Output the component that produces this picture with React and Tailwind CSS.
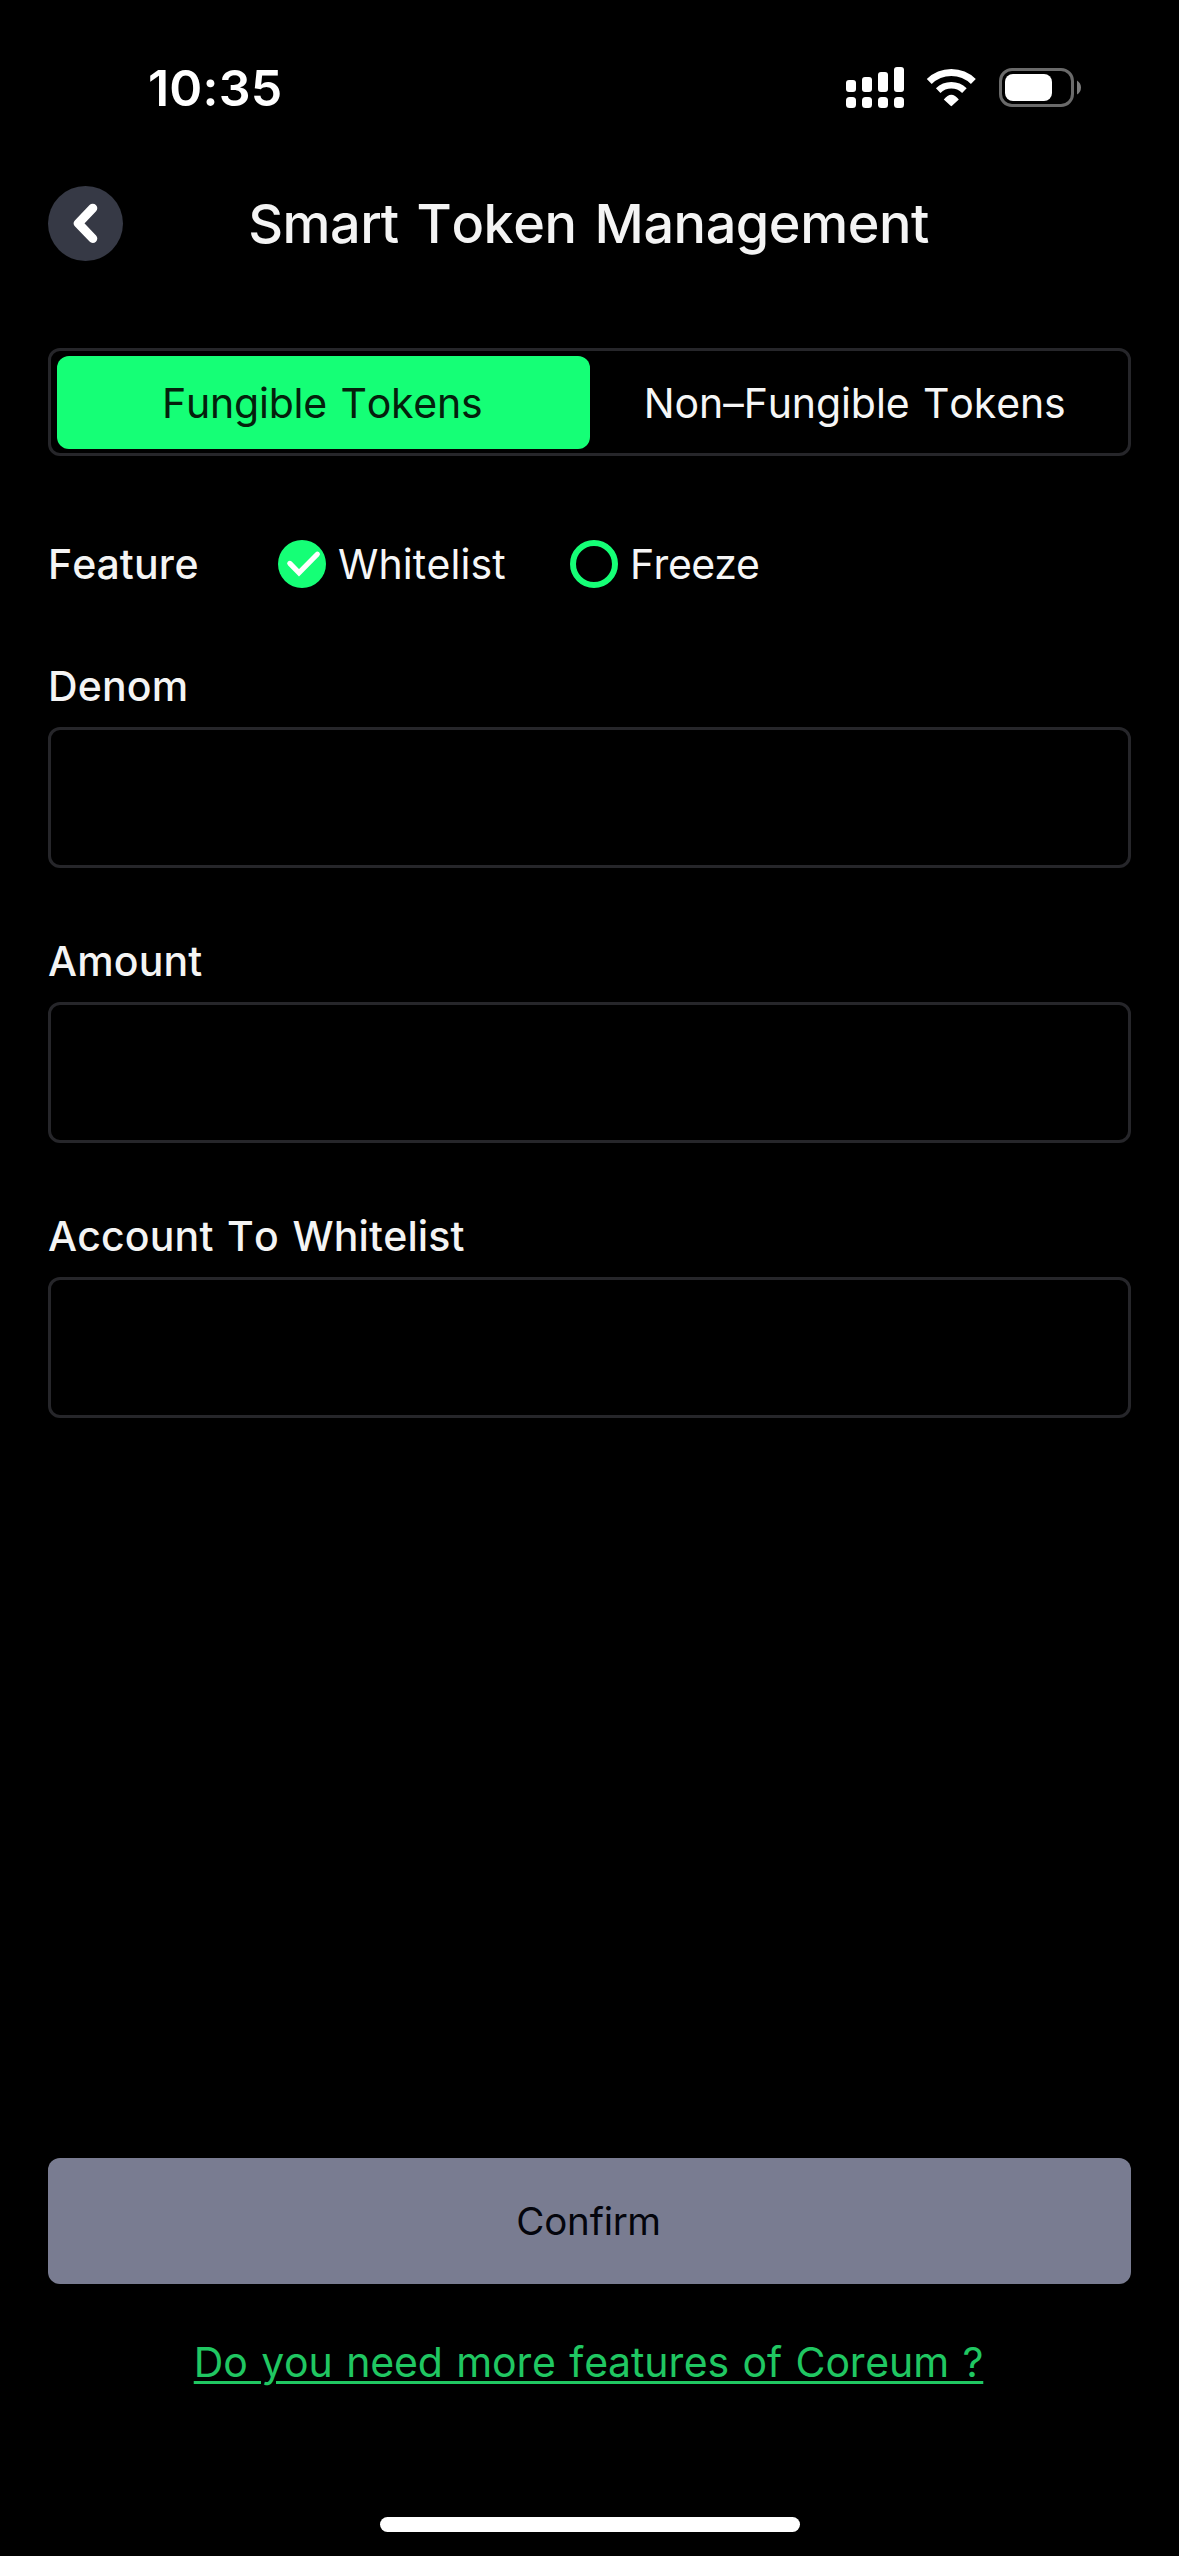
import React, { useState } from "react";

const BARS = [
  { x: 0, y: 13, h: 12 },
  { x: 16, y: 10, h: 15 },
  { x: 32, y: 5, h: 20 },
  { x: 48, y: 0, h: 25 },
];

function SignalIcon() {
  return (
    <svg width="58" height="41" viewBox="0 0 58 41" fill="#fff">
      {BARS.map((b) => (
        <g key={b.x}>
          <rect x={b.x} y={b.y} width="10" height={b.h} rx="3" />
          <rect x={b.x} y="30" width="10" height="11" rx="3.5" />
        </g>
      ))}
    </svg>
  );
}

function WifiIcon() {
  return (
    <svg width="51" height="40" viewBox="0 0 51 40" fill="none" stroke="#fff">
      <path d="M3.25 13.5A31.5 31.5 0 0 1 47.35 13.5" strokeWidth="7" />
      <path d="M12.2 22.6A18.75 18.75 0 0 1 38.4 22.6" strokeWidth="6.5" />
      <path d="M17.8 31.5Q25.3 22 32.8 31.5L26 37.8Q25.3 38.5 24.6 37.8Z" fill="#fff" stroke="none" />
    </svg>
  );
}

function BatteryIcon() {
  return (
    <svg width="82" height="39" viewBox="0 0 82 39">
      <rect x="1.5" y="1.5" width="72" height="36" rx="11.5" fill="none" stroke="#6a6a6a" strokeWidth="3" />
      <rect x="6" y="6" width="47" height="27" rx="8" fill="#fff" />
      <path d="M78 12.5Q82 15 82 19.5Q82 24 78 26.5Z" fill="#7c7c7c" />
    </svg>
  );
}

function StatusBar() {
  return (
    <div className="flex h-[175px] shrink-0 items-center justify-between pr-[98px] pl-[148px]">
      <span className="text-[50px] leading-[60px] font-semibold tracking-[0.2px] text-white">10:35</span>
      <div className="flex items-center">
        <SignalIcon />
        <span className="ml-[22px]">
          <WifiIcon />
        </span>
        <span className="ml-[22px]">
          <BatteryIcon />
        </span>
      </div>
    </div>
  );
}

function Header() {
  return (
    <header className="mt-[11px] grid h-[75px] shrink-0 grid-cols-[75px_1fr_75px] items-center px-12">
      <button aria-label="Back" className="size-[75px] rounded-full bg-[#363945]">
        <svg width="75" height="75" viewBox="0 0 75 75" fill="none" stroke="#fff" strokeWidth="9" strokeLinecap="round" strokeLinejoin="round">
          <path d="M44.8 22.2L30.3 37.4L44.8 52.5" />
        </svg>
      </button>
      <h1 className="pr-0.5 text-center text-[54px] leading-[64px] font-medium tracking-[-0.45px] whitespace-nowrap text-[#f4f4f4] [word-spacing:4px]">
        Smart Token Management
      </h1>
    </header>
  );
}

function Tab({ active, onClick, children }) {
  return (
    <button
      onClick={onClick}
      className={
        "h-[93px] rounded-xl text-[41px] leading-[50px] [word-spacing:2px] " +
        (active ? "bg-[#15ff76] pr-0.5 tracking-[-0.2px] text-[#04200c]" : "pr-0.5 tracking-[-0.1px] text-[#f6f6f6]")
      }
    >
      {children}
    </button>
  );
}

function Option({ checked, onClick, children }) {
  return (
    <button onClick={onClick} className="flex items-center text-[41px] leading-[50px] text-[#f6f6f6]">
      <svg width="48" height="48" viewBox="0 0 48 48" fill="none">
        {checked ? (
          <>
            <circle cx="24" cy="24" r="24" fill="#15ff76" />
            <path d="M11.8 23.4L21 32.8L39.3 14.2" stroke="#fff" strokeWidth="5.2" strokeLinecap="round" />
          </>
        ) : (
          <circle cx="24" cy="24" r="21" stroke="#15ff76" strokeWidth="6" />
        )}
      </svg>
      {children}
    </button>
  );
}

function Field({ label }) {
  return (
    <label className="flex h-[275px] flex-col">
      <span className="text-[41px] leading-[50px] font-medium tracking-[0.15px] text-[#f4f4f4] [word-spacing:2.5px]">
        {label}
      </span>
      <input className="mt-4 h-[141px] w-full rounded-xl border-[3px] border-[#26262a] bg-transparent px-6 text-[41px] text-white outline-none" />
    </label>
  );
}

export default function App() {
  const [tab, setTab] = useState(0);
  const [feature, setFeature] = useState("Whitelist");
  return (
    <div className="flex h-[2556px] w-[1179px] flex-col bg-black font-['Inter',sans-serif] [font-kerning:none]">
      <StatusBar />
      <Header />
      <main className="flex flex-1 flex-col px-12">
        <div className="mt-[87px] grid h-[108px] grid-cols-2 rounded-xl border-[3px] border-[#26262a] px-1.5 pt-[5px]">
          <Tab active={tab === 0} onClick={() => setTab(0)}>
            Fungible Tokens
          </Tab>
          <Tab active={tab === 1} onClick={() => setTab(1)}>
            Non–Fungible Tokens
          </Tab>
        </div>

        <div className="mt-[83px] flex h-[50px] items-center">
          <span className="w-[230px] text-[41px] leading-[50px] font-medium tracking-[0.1px] text-[#f4f4f4]">
            Feature
          </span>
          <Option checked={feature === "Whitelist"} onClick={() => setFeature("Whitelist")}>
            <span className="w-[244px] pl-3 text-left tracking-[0.1px]">Whitelist</span>
          </Option>
          <Option checked={feature === "Freeze"} onClick={() => setFeature("Freeze")}>
            <span className="pl-3 tracking-[-0.8px]">Freeze</span>
          </Option>
        </div>

        <div className="mt-[72px] flex flex-col">
          <Field label="Denom" />
          <Field label="Amount" />
          <Field label="Account To Whitelist" />
        </div>

        <button className="mt-auto h-[126px] shrink-0 rounded-xl bg-[#797c91] pr-0.5 text-[38.5px] leading-[48px] tracking-[-0.2px] text-[#04050c]">
          Confirm
        </button>
        <a
          href="#features"
          className="mt-[53px] self-center pr-0.5 text-[41px] leading-[50px] tracking-[-0.1px] whitespace-nowrap text-[#20c762] underline decoration-[3px] underline-offset-4 [word-spacing:2px]"
        >
          Do you need more features of Coreum ?
        </a>
      </main>
      <div className="mt-[130px] mb-6 h-[15px] w-[420px] shrink-0 self-center rounded-full bg-white" />
    </div>
  );
}
